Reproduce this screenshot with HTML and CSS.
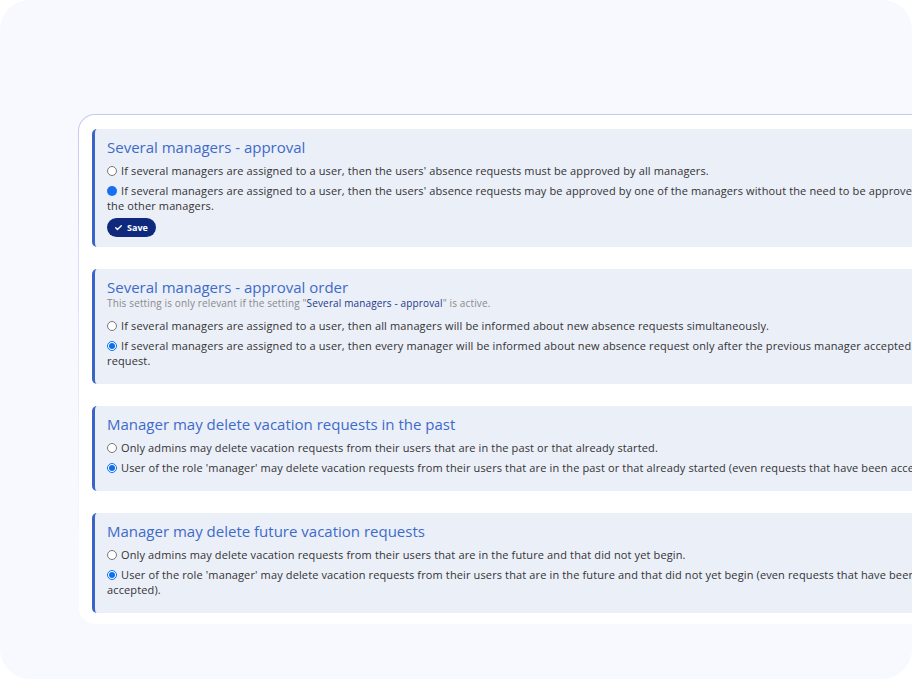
FILE: index.html
```html
<!DOCTYPE html>
<html lang="en">
<head>
    <meta charset="UTF-8">
    <meta name="viewport" content="width=device-width, initial-scale=1.0">
    <title>Settings - managers</title>
    <link rel="stylesheet" href="styles.css">
</head>
<body>
    <div class="panel">
        <div class="card-frame">
            <div class="card">
                <div class="setting">
                    <h3>Several managers - approval</h3>
                    <label class="option">
                        <input type="radio" name="approval">
                        <span>If several managers are assigned to a user, then the users' absence requests must be approved by all managers.</span>
                    </label>
                    <label class="option">
                        <input type="radio" name="approval" class="filled" checked>
                        <span>If several managers are assigned to a user, then the users' absence requests may be approved by one of the managers without the need to be approved by the other managers.</span>
                    </label>
                    <button class="save-btn">
                        <svg width="9" height="9" viewBox="0 0 16 16"><path d="M3 8.5l3.2 3.2L13 5" fill="none" stroke="#fff" stroke-width="2.4" stroke-linecap="round" stroke-linejoin="round"/></svg>
                        Save
                    </button>
                </div>

                <div class="setting">
                    <h3>Several managers - approval order</h3>
                    <p class="note">This setting is only relevant if the setting "<a href="#">Several managers - approval</a>" is active.</p>
                    <label class="option">
                        <input type="radio" name="order">
                        <span>If several managers are assigned to a user, then all managers will be informed about new absence requests simultaneously.</span>
                    </label>
                    <label class="option">
                        <input type="radio" name="order" checked>
                        <span>If several managers are assigned to a user, then every manager will be informed about new absence request only after the previous manager accepted the request.</span>
                    </label>
                </div>

                <div class="setting">
                    <h3>Manager may delete vacation requests in the past</h3>
                    <label class="option">
                        <input type="radio" name="past">
                        <span>Only admins may delete vacation requests from their users that are in the past or that already started.</span>
                    </label>
                    <label class="option">
                        <input type="radio" name="past" checked>
                        <span>User of the role 'manager' may delete vacation requests from their users that are in the past or that already started (even requests that have been accepted).</span>
                    </label>
                </div>

                <div class="setting">
                    <h3>Manager may delete future vacation requests</h3>
                    <label class="option">
                        <input type="radio" name="future">
                        <span>Only admins may delete vacation requests from their users that are in the future and that did not yet begin.</span>
                    </label>
                    <label class="option">
                        <input type="radio" name="future" checked>
                        <span>User of the role 'manager' may delete vacation requests from their users that are in the future and that did not yet begin (even requests that have been accepted).</span>
                    </label>
                </div>
            </div>
        </div>
    </div>
</body>
</html>
```

FILE: styles.css
```css
html, body {
    margin: 0;
    background: #ffffff;
    overflow: hidden;
}
body {
    font-family: "Open Sans", "Noto Sans", sans-serif;
    color: #333333;
    width: 912px;
    height: 679px;
}
.panel {
    width: 912px;
    height: 679px;
    background: #f8f9fe;
    border-radius: 30px;
    padding: 114px 0 0 78px;
    box-sizing: border-box;
    overflow: hidden;
}
/* thin blue outline that fades out toward the bottom */
.card-frame {
    width: 882px;
    padding: 1px 0 0 1px;
    border-radius: 17px;
    background: linear-gradient(to bottom, #c3c9f3 0%, #dfe3f9 40%, #f8f9fe 85%);
}
.card {
    background: #ffffff;
    border-radius: 16px;
    padding: 14px 0 11px 13px;
    display: flex;
    flex-direction: column;
    gap: 22px;
}
.setting {
    background: #ebeff8;
    border-left: 3px solid #3b65c4;
    border-radius: 5px 0 0 5px;
    padding: 8px 12px 16px 12px;
    display: flex;
    flex-direction: column;
    gap: 5px;
}
.setting h3 {
    margin: 0 0 1px 0;
    font-size: 15px;
    line-height: 20px;
    font-weight: 500;
    color: #3d6bc9;
}
.note {
    margin: -6px 0 4px 0;
    font-size: 10px;
    line-height: 12px;
    letter-spacing: 0.14px;
    color: #8a8a8a;
}
.note a {
    color: #1d3788;
    text-decoration: none;
}
.option {
    display: block;
    font-size: 11px;
    line-height: 15px;
    letter-spacing: 0.13px;
}
.option input {
    width: 10px;
    height: 10px;
    margin: 0 1px 0 0;
    vertical-align: -1px;
    accent-color: #0b6ff0;
}
.option input.filled {
    appearance: none;
    border-radius: 50%;
    background: #1a6ff0;
}
.save-btn {
    align-self: flex-start;
    display: flex;
    align-items: center;
    gap: 4px;
    height: 19px;
    padding: 0 8px 0 7px;
    margin-bottom: -6px;
    border: none;
    border-radius: 10px;
    background: #0f2a7c;
    color: #ffffff;
    font-family: "Open Sans", sans-serif;
    font-size: 9px;
    font-weight: 700;
    cursor: pointer;
}
```
